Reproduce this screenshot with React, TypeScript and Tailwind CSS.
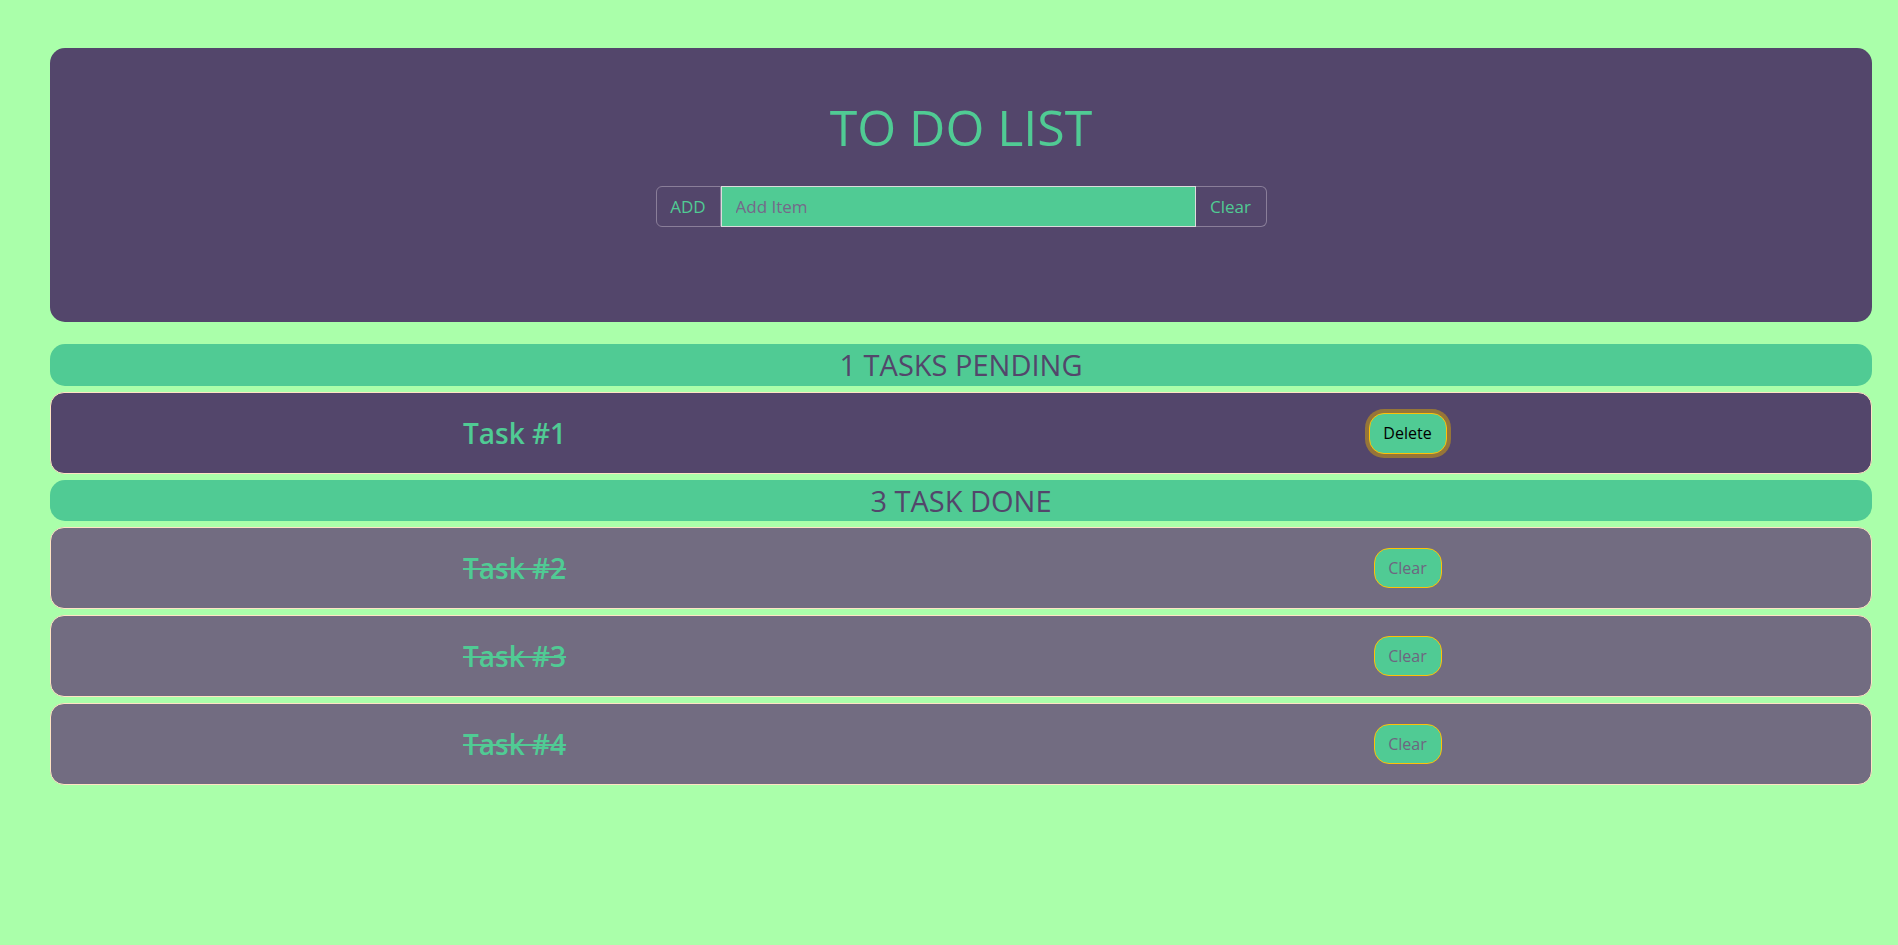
import React from "react";

const tasks = [
  { id: 1, title: "Task #1", done: false },
  { id: 2, title: "Task #2", done: true },
  { id: 3, title: "Task #3", done: true },
  { id: 4, title: "Task #4", done: true },
];

function TaskRow({ title, done }: { title: string; done: boolean }) {
  return (
    <div
      className={`h-[82px] rounded-[14px] border border-[#ffe4c4] px-[17px] grid grid-cols-2 items-center ${
        done ? "bg-[#726c81]" : "bg-[#53466b]"
      }`}
    >
      <div className="text-center">
        <span
          className={`text-[28px] font-semibold text-[#50cb94] ${done ? "line-through" : ""}`}
          style={{ fontFamily: "'Open Sans', sans-serif" }}
        >
          {title}
        </span>
      </div>
      <div className="flex justify-center">
        {done ? (
          <button className="h-[40px] w-[68px] rounded-[15px] border border-[#ffc107] bg-[#50cb94] text-[16px] text-[#6e6580] font-['Open_Sans',sans-serif]">
            Clear
          </button>
        ) : (
          <button className="h-[41px] w-[78px] rounded-[15px] border border-[#ffc107] bg-[#50cb94] text-[16px] text-black shadow-[0_0_0_4px_rgba(217,164,6,0.5)] font-['Open_Sans',sans-serif]">
            Delete
          </button>
        )}
      </div>
    </div>
  );
}

function Banner({ label, h }: { label: string; h: string }) {
  return (
    <div
      className={`${h} rounded-[15px] bg-[#50cb94] flex items-center justify-center text-[29px] text-[#53466b] font-['Open_Sans',sans-serif]`}
    >
      {label}
    </div>
  );
}

export default function App() {
  const pending = tasks.filter((t) => !t.done);
  const done = tasks.filter((t) => t.done);

  return (
    <div className="min-h-[945px] bg-[#aaffaa] pt-[48px] pl-[50px] pr-[26px] font-['Open_Sans',sans-serif]">
      <div className="h-[274px] rounded-[15px] bg-[#53466b] pt-[37px] flex flex-col items-center">
        <h1 className="text-[50px] leading-[60px] text-[#50cb94] mt-[12px]">TO DO LIST</h1>
        <div className="mt-[29px] flex h-[41px] w-[611px]">
          <button className="w-[65px] rounded-l-[6px] border border-[#8a7e99] text-[17px] text-[#50cb94]">
            ADD
          </button>
          <input
            className="flex-1 border border-[#dcdcdc] bg-[#50cb94] pl-[14px] text-[17px] text-[#53466b] outline-none placeholder:text-[#75698a]"
            placeholder="Add Item"
          />
          <button className="w-[71px] rounded-r-[6px] border border-l-0 border-[#8a7e99] text-[17px] text-[#50cb94]">
            Clear
          </button>
        </div>
      </div>

      <div className="mt-[22px] flex flex-col gap-[6px]">
        <Banner label={`${pending.length} TASKS PENDING`} h="h-[42px]" />
        {pending.map((t) => (
          <TaskRow key={t.id} title={t.title} done={false} />
        ))}
        <Banner label={`${done.length} TASK DONE`} h="h-[41px]" />
        {done.map((t) => (
          <TaskRow key={t.id} title={t.title} done />
        ))}
      </div>
    </div>
  );
}
